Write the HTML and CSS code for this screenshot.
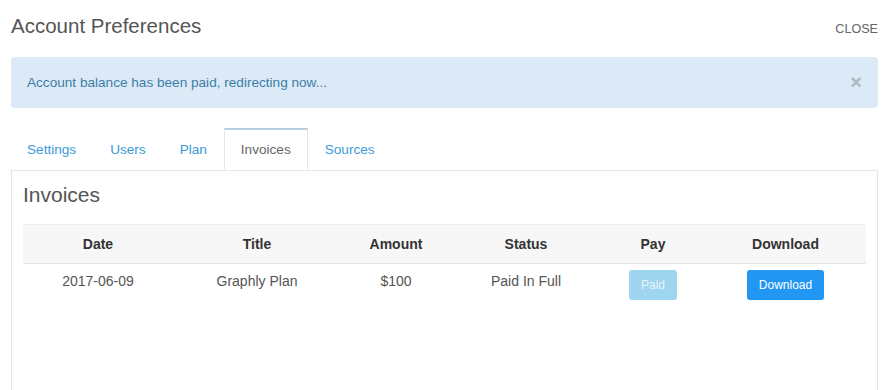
FILE: index.html
```html
<!DOCTYPE html>
<html>
<head>
  <title>Account Preferences</title>
  <link rel="stylesheet" href="styles.css">
</head>
<body>
  <div class="modal">
    <div class="modal-header">
      <h1>Account Preferences</h1>
      <a class="close" href="#">CLOSE</a>
    </div>
    <div class="alert">
      <span>Account balance has been paid, redirecting now...</span>
      <span class="alert-x">&times;</span>
    </div>
    <ul class="tabs">
      <li><a href="#">Settings</a></li>
      <li><a href="#">Users</a></li>
      <li><a href="#">Plan</a></li>
      <li class="active"><a href="#">Invoices</a></li>
      <li><a href="#">Sources</a></li>
    </ul>
    <div class="panel">
      <h2>Invoices</h2>
      <table class="invoices">
        <colgroup>
          <col style="width:150px"><col style="width:168px"><col style="width:110px">
          <col style="width:150px"><col style="width:104px"><col style="width:161px">
        </colgroup>
        <thead>
          <tr><th>Date</th><th>Title</th><th>Amount</th><th>Status</th><th>Pay</th><th>Download</th></tr>
        </thead>
        <tbody>
          <tr>
            <td>2017-06-09</td>
            <td>Graphly Plan</td>
            <td>$100</td>
            <td class="status">Paid In Full</td>
            <td><span class="btn btn-paid">Paid</span></td>
            <td><a class="btn btn-primary" href="#">Download</a></td>
          </tr>
        </tbody>
      </table>
    </div>
  </div>
</body>
</html>
```

FILE: styles.css
```css
body { margin: 0; background: #fff; font-family: 'Liberation Sans', Arial, sans-serif; color: #555; }
.modal { padding: 0 10px 0 11px; }
.modal-header { display: flex; justify-content: space-between; align-items: baseline; height: 57px; }
.modal-header h1 { margin: 0; padding-top: 14px; font-size: 20.5px; font-weight: normal; color: #555; }
.close { font-size: 12.6px; color: #666; text-decoration: none; }
.alert { display: flex; justify-content: space-between; align-items: center; height: 51px; box-sizing: border-box; padding: 0 16px; background: #dceaf7; border-radius: 4px; color: #3d7ea8; font-size: 13.6px; }
.alert-x { color: #a9b8c4; font-size: 20px; font-weight: bold; }
.tabs { list-style: none; margin: 20px 0 0 -1px; padding: 0; display: flex; height: 42px; border-bottom: 1px solid #e6e6e6; }
.tabs li { margin-bottom: -1px; }
.tabs a { display: block; height: 42px; box-sizing: border-box; padding: 12px 16px 0; font-size: 13.6px; color: #3b9ad9; text-decoration: none; border: 1px solid transparent; border-top-width: 2px; }
.tabs li.active a { color: #666; background: #fff; border-color: #e6e6e6; border-top-color: #b7cde0; border-bottom-color: #fff; }
.panel { border: 1px solid #e6e6e6; border-top: none; padding: 12px 11px 90px; }
.panel h2 { margin: 0 0 17px; font-size: 21px; font-weight: normal; color: #555; }
.invoices { width: 100%; border-collapse: collapse; table-layout: fixed; font-size: 14px; }
.invoices th { background: #f7f7f7; font-weight: bold; color: #333; height: 35px; padding-bottom: 2px; border-top: 1px solid #eee; border-bottom: 1px solid #e6e6e6; }
.invoices td { text-align: center; height: 46px; vertical-align: top; padding-top: 9px; color: #555; }
.btn { display: inline-block; font-size: 12px; color: #fff; text-decoration: none; border-radius: 3px; padding: 8px 12px; margin-top: -3px; }
.btn-paid { background: #9ed5ef; color: #e6f4fb; }
.btn-primary { background: #2196f3; }
```
